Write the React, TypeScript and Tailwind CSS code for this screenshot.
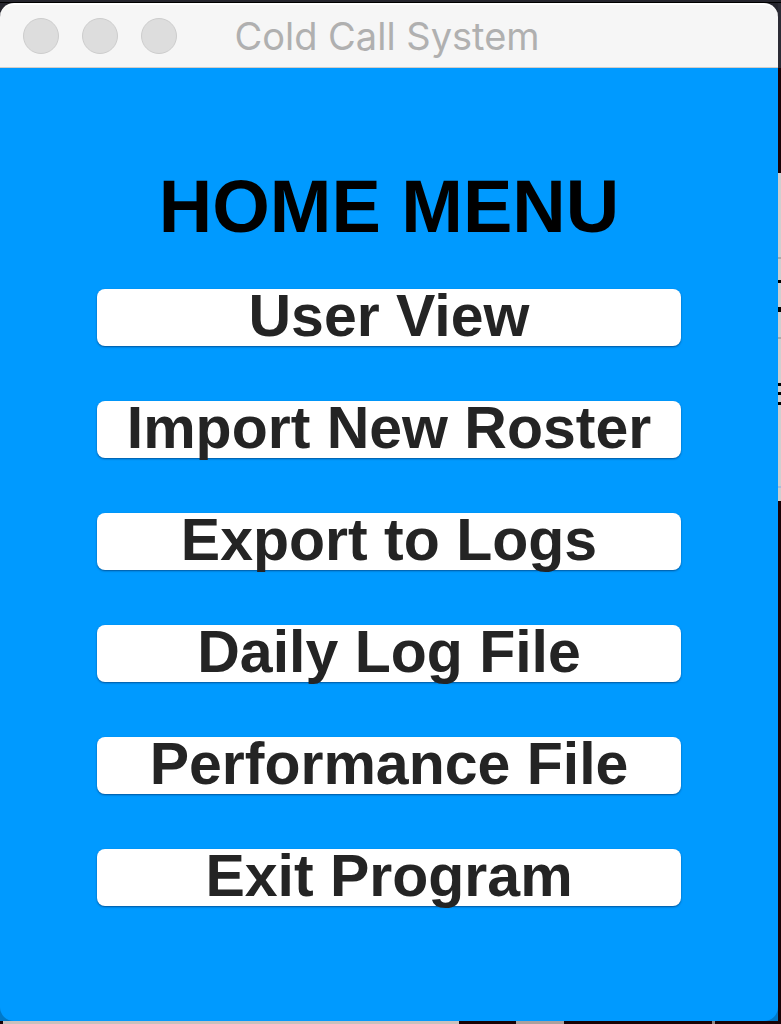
const menuItems = [
  'User View',
  'Import New Roster',
  'Export to Logs',
  'Daily Log File',
  'Performance File',
  'Exit Program',
];

function TitleBar() {
  return (
    <header className="relative flex h-[65px] shrink-0 items-center justify-center rounded-t-[14px] border-t-2 border-b border-t-white border-b-[#d2cdc9] bg-[#f6f6f6] pr-1">
      <div className="absolute top-[13px] left-[23px] flex gap-[23px]">
        <button type="button" aria-label="Close" className="size-9 rounded-full border border-[#cdcdcd] bg-[#dddddd]" />
        <button type="button" aria-label="Minimize" className="size-9 rounded-full border border-[#cdcdcd] bg-[#dddddd]" />
        <button type="button" aria-label="Zoom" className="size-9 rounded-full border border-[#cdcdcd] bg-[#dddddd]" />
      </div>
      <span className="font-['Inter',sans-serif] text-[38px] leading-none text-[#b0b0b0]">Cold Call System</span>
    </header>
  );
}

function DesktopRightEdge() {
  return (
    <div aria-hidden="true" className="flex w-[3px] shrink-0 flex-col bg-[#180206]">
      <div className="h-[65px] bg-[#2b2b35]" />
      <div className="h-[105px]" />
      <div className="flex h-[328px] flex-col bg-[#cfcfd0]">
        <div className="mt-[84px] h-0.5 bg-[#aaaaaa]" />
        <div className="mt-[21px] h-[3px] bg-black" />
        <div className="mt-[24px] h-[5px] bg-black" />
        <div className="mt-[25px] h-0.5 bg-[#aaaaaa]" />
        <div className="mt-[44px] h-[3px] bg-black" />
        <div className="mt-[6px] h-[3px] bg-black" />
        <div className="mt-[7px] h-[3px] bg-black" />
        <div className="mt-[81px] h-0.5 bg-[#a9bdd8]" />
      </div>
    </div>
  );
}

function DesktopBottomEdge() {
  return (
    <div aria-hidden="true" className="flex h-[3px] shrink-0 bg-[#180206]">
      <div className="ml-[3px] w-[456px] bg-[#c9c1bd]" />
      <div className="ml-[57px] w-[48px] bg-[#aaa09e]" />
      <div className="ml-[148px] w-[3px] bg-[#8e8585]" />
    </div>
  );
}

export default function App() {
  return (
    <div className="flex min-h-screen flex-col bg-[#25252d]">
      <div className="h-[3px] shrink-0 border-b border-[#000000]" />
      <div className="flex flex-1">
        <div className="flex min-w-0 flex-1 flex-col">
          <TitleBar />
          <div className="flex flex-1 flex-col bg-[#0079c8]">
            <main className="flex flex-1 flex-col rounded-b-[14px] bg-[#009aff] px-[97px] pt-[102px] pb-16 font-['Liberation_Sans',Arial,sans-serif] font-bold">
              <h1 className="text-center text-[74px] leading-none whitespace-nowrap text-black">HOME MENU</h1>
              <nav className="mt-[45px] flex flex-col gap-[55px]">
                {menuItems.map((item) => (
                  <button
                    key={item}
                    type="button"
                    className="flex h-[57px] items-center justify-center rounded-lg bg-white pb-0.5 text-[59px] leading-none whitespace-nowrap text-[#242424] shadow-[0_1px_2px_rgba(0,40,90,0.6)]"
                  >
                    {item}
                  </button>
                ))}
              </nav>
            </main>
          </div>
        </div>
        <DesktopRightEdge />
      </div>
      <DesktopBottomEdge />
    </div>
  );
}
